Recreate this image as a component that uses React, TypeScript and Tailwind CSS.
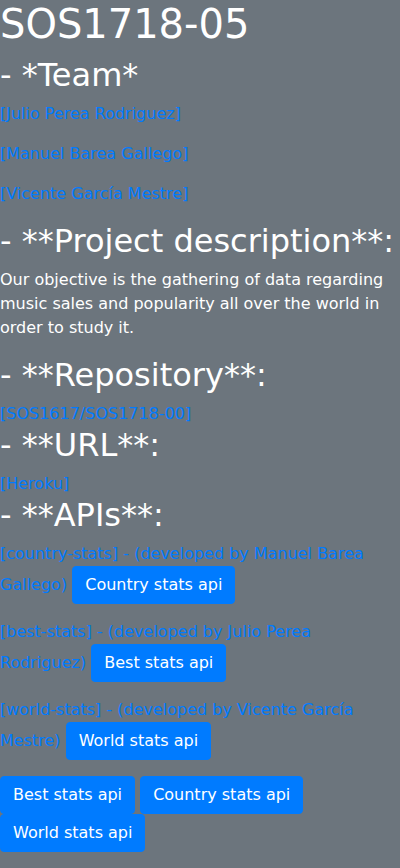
import type { ReactNode } from "react";

function Heading({ children }: { children: ReactNode }) {
  return <h2 className="mb-2 text-[32px] leading-[38px] font-medium">{children}</h2>;
}

function TextLink({ children }: { children: ReactNode }) {
  return (
    <a href="#" className="text-[#007bff]">
      {children}
    </a>
  );
}

function ApiButton({ children }: { children: ReactNode }) {
  return (
    <button
      type="button"
      className="inline-block rounded border border-[#007bff] bg-[#007bff] px-3 py-1.5 text-center align-middle text-base leading-6 text-white"
    >
      {children}
    </button>
  );
}

const team = ["Julio Perea Rodriguez", "Manuel Barea Gallego", "Vicente García Mestre"];

const apis = [
  { name: "country-stats", author: "Manuel Barea Gallego", button: "Country stats api" },
  { name: "best-stats", author: "Julio Perea Rodriguez", button: "Best stats api" },
  { name: "world-stats", author: "Vicente García Mestre", button: "World stats api" },
];

export default function App() {
  return (
    <main className="min-h-screen bg-[#6c757d] font-['DejaVu_Sans',sans-serif] text-base leading-6 text-white">
      <h1 className="mb-2 text-[40px] leading-[48px] font-medium">SOS1718-05</h1>

      <Heading>- *Team*</Heading>
      {team.map((name) => (
        <p key={name} className="mb-4">
          <TextLink>{`[${name}]`}</TextLink>
        </p>
      ))}

      <Heading>- **Project description**:</Heading>
      <p className="mb-4">
        Our objective is the gathering of data regarding music sales and popularity all over the world in order to
        study it.
      </p>

      <Heading>- **Repository**:</Heading>
      <TextLink>[SOS1617/SOS1718-00]</TextLink>

      <Heading>- **URL**:</Heading>
      <TextLink>[Heroku]</TextLink>

      <Heading>- **APIs**:</Heading>
      {apis.map((api) => (
        <p key={api.name} className="mb-4">
          <TextLink>{`[${api.name}] - (developed by ${api.author})`}</TextLink>{" "}
          <ApiButton>{api.button}</ApiButton>
        </p>
      ))}

      <ApiButton>Best stats api</ApiButton> <ApiButton>Country stats api</ApiButton>{" "}
      <ApiButton>World stats api</ApiButton>
    </main>
  );
}
